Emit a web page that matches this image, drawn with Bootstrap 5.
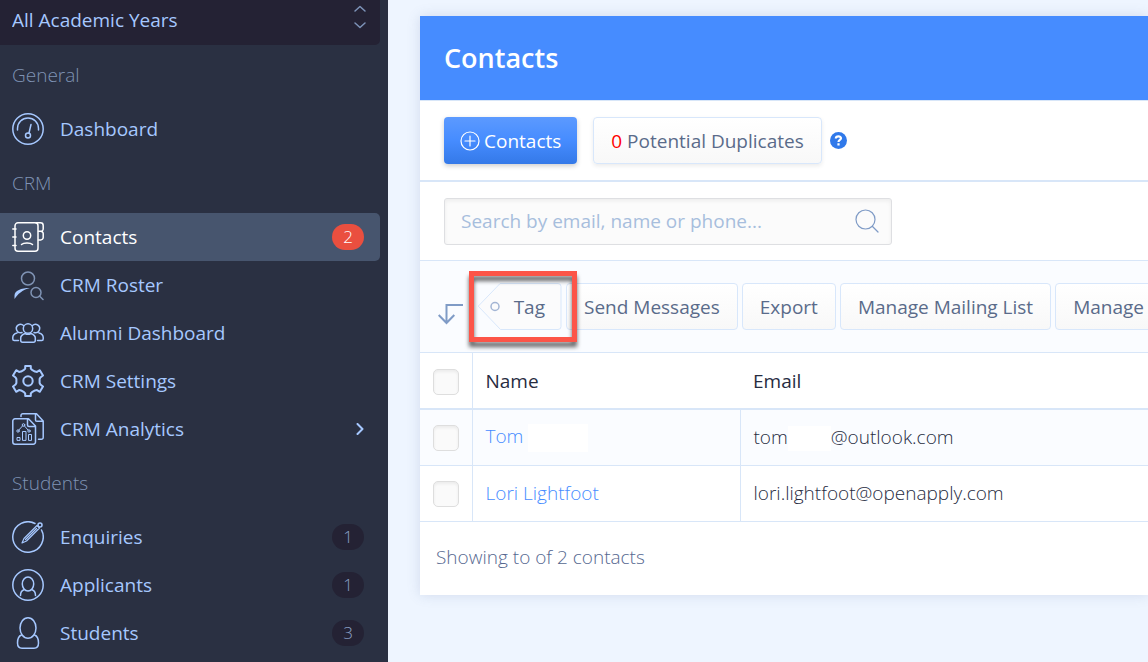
<!DOCTYPE html>
<html lang="en">
<head>
<meta charset="utf-8">
<meta name="viewport" content="width=device-width, initial-scale=1">
<title>Contacts</title>
<link href="https://cdn.jsdelivr.net/npm/bootstrap@5.3.0/dist/css/bootstrap.min.css" rel="stylesheet">
<style>
  body { font-family: "Open Sans", "Noto Sans", sans-serif; font-size: 19px; line-height: 28px; color: #272c3f; background: #eef5ff; }
  .shell { min-height: 100vh; overflow: hidden; }
  .sidebar { flex: 0 0 388px; background: #2a3042; padding-right: 8px; color: #a6c8ff; }
  .year-picker { height: 45px; padding: 0 12px; background: #242234; border-bottom-right-radius: 5px; }
  .year-picker select { appearance: none; background: none; border: 0; padding: 0 0 6px; color: #a6c8ff; outline: 0; }
  .year-picker svg { width: 16px; height: 26px; color: #7d93b8; margin-bottom: 12px; }
  .group-title { height: 60px; padding: 0 12px; margin: 0; font-size: 19px; font-weight: 300; color: #7f93b4; }
  .side-link { height: 48px; padding: 0 16px 0 12px; gap: 16px; color: #a6c8ff; text-decoration: none; border-radius: 0 5px 5px 0; }
  .side-link.current { background: #47556e; color: #fff; }
  .side-link > svg:first-child { width: 32px; height: 32px; flex: none; }
  svg { fill: none; stroke: currentColor; stroke-width: 1.5; stroke-linecap: round; stroke-linejoin: round; }
  svg.thin { stroke-width: 1.2; }
  svg.thick { stroke-width: 2; }
  .count { width: 32px; height: 26px; border-radius: 13px; background: #242234; color: #8da3c8; font-size: 17px; font-weight: 300; }
  .current .count { background: #ea4f3f; color: #fff; }
  .main-area { flex: 1 1 0; min-width: 0; padding: 16px 0 0 32px; }
  .panel { background: #fff; box-shadow: 0 0 12px rgba(80,100,150,.18); }
  .panel-top { height: 84px; padding: 0 24px; background: #468cff; color: #fff; }
  .panel-top h1 { font-size: 27px; line-height: 36px; font-weight: 600; }
  .tools { height: 82px; padding: 0 24px; border-top: 1px solid #d8e6f8; border-bottom: 2px solid #d8e6f8; }
  .ctl { height: 47px; padding: 0 17px; border: 1px solid #d8e7fb; border-radius: 4px; background: linear-gradient(#fff, #f8f8f8); color: #5a6b8a; white-space: nowrap; flex: none; }
  .ctl.raised { box-shadow: 0 2px 4px rgba(0,0,0,.08); }
  .ctl.main-ctl { padding: 0 16px; border: 0; background: linear-gradient(#5c9aff, #468cff 50%, #3479e8); color: #fff; box-shadow: 0 2px 5px rgba(0,0,0,.2); }
  .zero { color: #f00; }
  .help { color: #3079ea; }
  .search-row { height: 78px; padding: 0 24px; }
  .search-box { width: 448px; height: 47px; padding: 0 12px 0 16px; border: 1px solid #dedfe2; border-radius: 3px; background: #fbfbfb; box-shadow: inset 0 2px 4px rgba(0,0,0,.06); }
  .search-box input { background: none; border: 0; outline: 0; padding: 0; min-width: 0; }
  .search-box input::placeholder { color: #a7bedd; opacity: 1; }
  .search-box svg { color: #7f9bc6; }
  .actions { height: 93px; padding: 0 0 0 18px; gap: 4px; background: #fafcff; border-top: 1px solid #d8e6f8; border-bottom: 1px solid #d8e6f8; }
  .turn { width: 26px; height: 24px; flex: none; margin-right: 10px; margin-top: 14px; color: #7f9bc6; }
  .tag-ctl { width: 84px; height: 47px; padding: 0 17px 0 0; border: 0; background: none; color: #5a6b8a; flex: none; }
  .tag-ctl svg { position: absolute; inset: 0; width: 84px; height: 47px; }
  .tag-ctl span { position: relative; }
  .callout-box { position: absolute; inset: -12px -15px -12px -9px; border: 5px solid #fc5548; filter: drop-shadow(0 5px 2px rgba(0,0,0,.6)); pointer-events: none; z-index: 2; }
  .last-ctl { min-width: 190px; text-align: left; }
  .grid-table { margin: 0; table-layout: fixed; border-color: #d8e6f8; font-weight: 300; }
  .grid-table > :not(caption) > * > * { padding: 0 13px; height: 56px; border-color: #d8e6f8; vertical-align: middle; color: #272c3f; background: none; }
  .grid-table thead > tr > th { font-weight: 400; height: 56px; border-bottom-width: 2px; }
  .grid-table .pick-col { width: 52px; }
  .grid-table .name-col { width: 268px; }
  .grid-table tbody td:not(:last-child), .grid-table thead th:first-child { border-right: 1px solid #d8e6f8; }
  .grid-table tbody tr:first-child { background: #fafcff; }
  .grid-table a { color: #468cff; text-decoration: none; }
  .pick { appearance: none; display: block; width: 26px; height: 26px; margin: 2px 0 0; border: 1px solid #dedede; border-radius: 5px; background: #fafafa; box-shadow: inset 0 2px 3px rgba(0,0,0,.06); }
  .blank { display: inline-block; height: 28px; background: #fff; vertical-align: middle; }
  .blank.wide { width: 60px; }
  .blank.short { width: 43px; height: 25px; }
  .summary { height: 73px; padding: 0 16px 2px; font-weight: 300; color: #566890; }
</style>
</head>
<body>
<div class="shell d-flex">
  <nav class="sidebar" aria-label="Main">
    <div class="year-picker d-flex align-items-center">
      <select class="flex-grow-1" aria-label="Academic year"><option>All Academic Years</option></select>
      <svg viewBox="0 0 16 26"><path d="M3 7 8 2.500 13 7M3 19 8 23.500 13 19"/></svg>
    </div>
    <h2 class="group-title d-flex align-items-center">General</h2>
    <a class="side-link d-flex align-items-center" href="#">
      <svg viewBox="0 0 32 32"><circle cx="16" cy="16" r="15.200"/><path d="M5.500 17V15.500a10.500 10.500 0 0 1 21 0V17M19 11.500 17 20"/><circle cx="16" cy="22.500" r="2.500"/></svg>
      Dashboard</a>
    <h2 class="group-title d-flex align-items-center">CRM</h2>
    <a class="side-link current d-flex align-items-center" href="#" aria-current="page">
      <svg viewBox="0 0 32 32"><rect x="3" y="1.800" width="23" height="28.400" rx="3"/><path d="M.8 8H4M.8 16H4M.8 24.500H4M24 1.800H28.500a2.700 2.700 0 0 1 2.700 2.700V8a2.300 2.300 0 0 1-2.700 2.200H26.500M28.500 10.200a2.500 2.500 0 0 1 2.700 2.400V16.500a2.500 2.500 0 0 1-2.700 2.400H26.500M9.500 23.500c1-1 2.500-1.600 5.500-1.600s4.500.6 5.500 1.600"/><circle cx="15" cy="14.500" r="3.700"/></svg>
      Contacts <span class="count ms-auto d-flex align-items-center justify-content-center">2</span></a>
    <a class="side-link d-flex align-items-center" href="#">
      <svg viewBox="0 0 32 32"><g stroke="#7f93b4"><circle cx="16" cy="9.500" r="6.500"/><circle cx="24" cy="23.500" r="5"/><path d="M27.500 27 31 30.500"/></g><path d="M2.500 30V26.500c0-5 6.500-7.500 15.500-7.500C10 21 6 25 2.500 30Z" fill="#a6c8ff" stroke="none"/></svg>
      CRM Roster</a>
    <a class="side-link d-flex align-items-center" href="#">
      <svg viewBox="0 0 32 32"><circle cx="16" cy="11.500" r="4.700"/><path d="M10.500 25.200c-1.500 0-1.800-.6-1.800-2V21c0-2 1.500-3.500 4.300-4.500 2 1 4 1 6 0 2.800 1 4.300 2.500 4.300 4.500v2.200c0 1.400-.3 2-1.800 2Z"/><path d="M10 15.500a4.200 4.200 0 1 1 1.500-7M22 15.500a4.200 4.200 0 1 0-1.500-7M6.500 23.500H2.200C1 23.500.8 23 .8 22V20.500C.8 18 3 16.500 5 16M25.500 23.500H29.800c1.200 0 1.400-.5 1.400-1.500V20.500c0-2.500-2.200-4-4.200-4.500"/></svg>
      Alumni Dashboard</a>
    <a class="side-link d-flex align-items-center" href="#">
      <svg class="thick" viewBox="0 0 32 32"><path d="M13.200 1H18.800V3.500L20 4.900 23 6.600 25 6.900 27.800 5.200 31 10.500 28.400 12.500 27.600 14V18L28.400 19.500 31 21.500 27.800 26.800 25 25.100 23 25.400 20 27.100 18.800 28.500V31H13.200V28.500L12 27.100 9 25.400 7 25.100 4.200 26.800 1 21.500 3.600 19.500 4.400 18V14L3.600 12.500 1 10.500 4.200 5.200 7 6.900 9 6.600 12 4.900 13.200 3.500Z"/><circle cx="16" cy="16" r="4.700"/></svg>
      CRM Settings</a>
    <a class="side-link d-flex align-items-center" href="#">
      <svg viewBox="0 0 32 32"><path d="M3 5.800H16.500L23.500 13V29a2.200 2.200 0 0 1-2.200 2.200H3A2.200 2.200 0 0 1 .8 29V8A2.200 2.200 0 0 1 3 5.800ZM15.500 6V12a1.500 1.500 0 0 0 1.500 1.500H23.300M9 3.500V2.500A1.700 1.700 0 0 1 10.700.8H24.500L31.200 8V24.500a1.800 1.800 0 0 1-1.800 1.800H26.500M23.500 1V7A1.300 1.300 0 0 0 24.800 8.300H31"/><path stroke-width="1" d="M5 27V24.500H8V27ZM10.500 27V18.500H14V27ZM16.500 27V21.500H19.500V27ZM6.800 17 10.500 13M12.500 13 16 17"/><g stroke-width="1"><circle cx="6" cy="18" r="1.200"/><circle cx="11.500" cy="12" r="1.300"/><circle cx="17" cy="18" r="1.200"/></g></svg>
      CRM Analytics
      <svg class="thick ms-auto" width="8" height="12" viewBox="0 0 8 12"><path d="M1.500 1 6.500 6 1.500 11"/></svg></a>
    <h2 class="group-title d-flex align-items-center">Students</h2>
    <a class="side-link d-flex align-items-center" href="#">
      <svg viewBox="0 0 32 32"><path d="M23 2.500A15.200 15.200 0 1 0 29.500 9"/><path stroke-width="1.200" d="M10 22 12 17.500 25 4.500 27.500 7 14.500 20ZM24.500 7.500 13.500 18.500"/><circle cx="28" cy="4" r="2"/></svg>
      Enquiries <span class="count ms-auto d-flex align-items-center justify-content-center">1</span></a>
    <a class="side-link d-flex align-items-center" href="#">
      <svg viewBox="0 0 32 32"><circle cx="16" cy="16" r="15.200"/><ellipse cx="16" cy="15" rx="5.700" ry="7"/><path d="M8.500 26.500c0-3.500 1.300-5.200 4-6M23.500 26.500c0-3.500-1.300-5.200-4-6"/></svg>
      Applicants <span class="count ms-auto d-flex align-items-center justify-content-center">1</span></a>
    <a class="side-link d-flex align-items-center" href="#">
      <svg viewBox="0 0 32 32"><ellipse cx="16" cy="11" rx="8" ry="10.200"/><path d="M9.500 18C6.500 19 5.500 22 5.500 26c0 3.500 1.500 5.200 4.500 5.200H22c3 0 4.500-1.700 4.500-5.200 0-4-1-7-4-8"/></svg>
      Students <span class="count ms-auto d-flex align-items-center justify-content-center">3</span></a>
  </nav>

  <main class="main-area">
    <section class="panel">
      <header class="panel-top d-flex align-items-center"><h1 class="m-0">Contacts</h1></header>
      <div class="tools d-flex align-items-center">
        <button type="button" class="ctl main-ctl d-flex align-items-center me-3"><svg class="thin me-1" width="20" height="20" viewBox="0 0 20 20"><circle cx="10" cy="10" r="9"/><path d="M10 5V15M5 10H15"/></svg>Contacts</button>
        <button type="button" class="ctl raised me-2"><span class="zero">0</span> Potential Duplicates</button>
        <a class="help d-flex" href="#" aria-label="Help"><svg width="17" height="17" viewBox="0 0 17 17"><circle cx="8.500" cy="8.500" r="8.500" fill="currentColor" stroke="none"/><path stroke="#fff" stroke-width="2.200" stroke-linecap="butt" d="M5.800 6.500C6 3.600 11 3.600 11 6.300 11 8 8.500 8 8.500 10M8.500 11.300V13.500"/></svg></a>
      </div>
      <div class="search-row d-flex align-items-center">
        <div class="search-box d-flex align-items-center">
          <input class="flex-grow-1" type="text" placeholder="Search by email, name or phone..." aria-label="Search contacts">
          <svg class="thin" width="24" height="24" viewBox="0 0 24 24"><circle cx="10.500" cy="10.500" r="9.500"/><path d="M17.500 17.500 23 23"/></svg>
        </div>
      </div>
      <div class="actions d-flex align-items-center overflow-hidden">
        <svg class="turn" viewBox="0 0 26 24"><path stroke-width="2" stroke-linecap="butt" stroke-linejoin="miter" d="M25 3H8.500V21M.7 13 8.500 21 16.300 13"/></svg>
        <div class="position-relative flex-shrink-0">
          <button type="button" class="tag-ctl position-relative text-end"><svg viewBox="0 0 84 47"><path fill="#fbfbfc" stroke="#d8e7fb" stroke-width="1" d="M22.500.5H80a3 3 0 0 1 3 3V43.500a3 3 0 0 1-3 3H22.500L.5 23.500Z"/><circle cx="17" cy="23.500" r="4" stroke="#a3b5d4"/></svg><span>Tag</span></button>
          <div class="callout-box"></div>
        </div>
        <button type="button" class="ctl">Send Messages</button>
        <button type="button" class="ctl">Export</button>
        <button type="button" class="ctl">Manage Mailing List</button>
        <button type="button" class="ctl last-ctl">Manage</button>
      </div>
      <table class="table grid-table">
        <thead><tr><th class="pick-col"><input class="pick" type="checkbox" aria-label="Select all contacts"></th><th class="name-col">Name</th><th>Email</th></tr></thead>
        <tbody>
          <tr><td><input class="pick" type="checkbox" aria-label="Select Tom"></td><td><a href="#">Tom</a> <span class="blank wide"></span></td><td>tom<span class="blank short"></span>@outlook.com</td></tr>
          <tr><td><input class="pick" type="checkbox" aria-label="Select Lori Lightfoot"></td><td><a href="#">Lori Lightfoot</a></td><td>lori.lightfoot@openapply.com</td></tr>
        </tbody>
      </table>
      <div class="summary d-flex align-items-center">Showing to of 2 contacts</div>
    </section>
  </main>
</div>
<script src="https://cdn.jsdelivr.net/npm/bootstrap@5.3.0/dist/js/bootstrap.bundle.min.js"></script>
</body>
</html>
